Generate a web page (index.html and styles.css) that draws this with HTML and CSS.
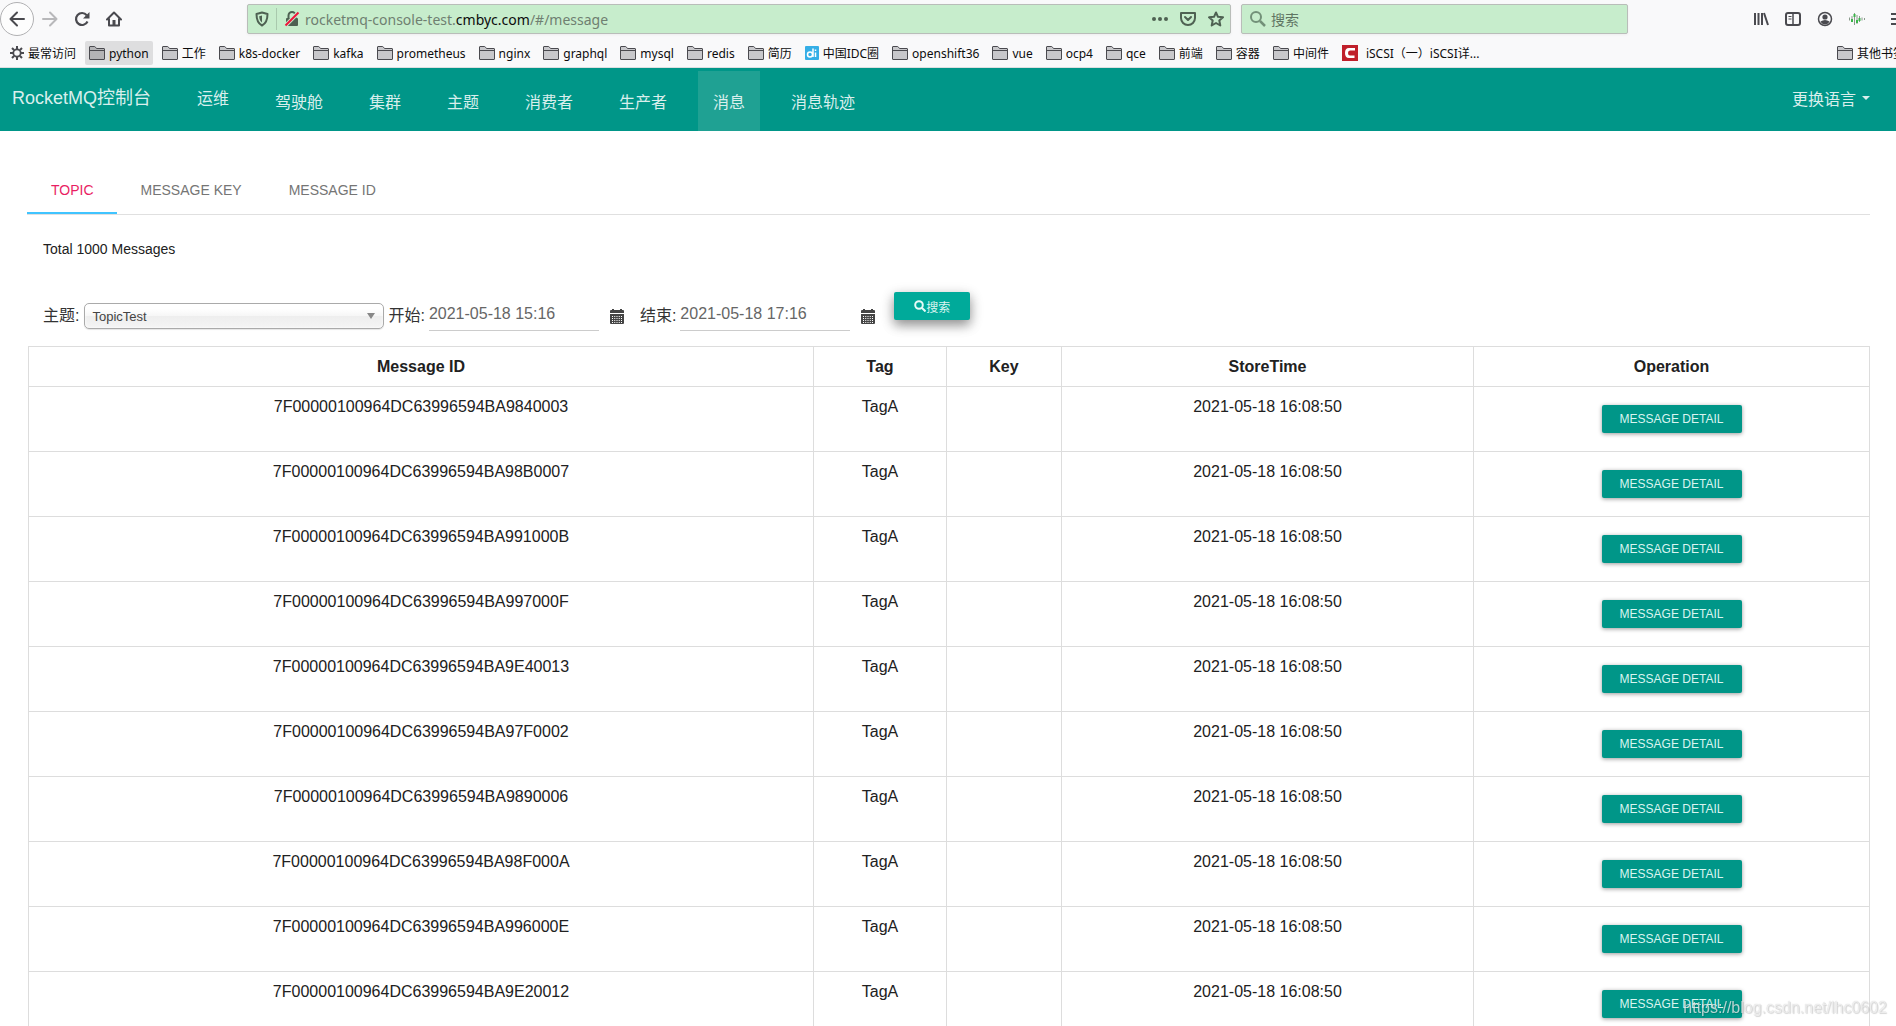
FILE: index.html
```html
<!DOCTYPE html>
<html lang="zh-CN">
<head>
<meta charset="utf-8">
<title>RocketMQ控制台</title>
<link rel="stylesheet" href="styles.css">
</head>
<body>
<svg class="sprite" aria-hidden="true">
  <symbol id="folder" viewBox="0 0 16 16"><path d="M.5 14V2q0-.5.5-.5h4.500q.6 0 .9.600L7.500 3.500h7.500q.5 0 .5.5v10q0 .5-.5.5H1q-.5 0-.5-.5z" fill="currentColor"/><path d="M.5 14V2q0-.5.5-.5h4.500q.6 0 .9.600L7.500 3.500h7.500q.5 0 .5.5v10q0 .5-.5.5H1q-.5 0-.5-.5zM.5 5.500h15" fill="none" stroke="#4a4a4f"/></symbol>
  <symbol id="calendar" viewBox="0 0 14 15"><path d="M1 1h1V0h2v1h6V0h2v1h1q1 0 1 1v2H0V2q0-1 1-1zM0 5h14v9q0 1-1 1H1q-1 0-1-1z" fill="#444"/><path d="M2 7.500h10M2 9.500h10M2 11.500h10M2 13.500h10" stroke="#fff" stroke-width="1" stroke-dasharray="1 1.250"/></symbol>
</svg>

<header class="browser">
  <div class="toolbar">
    <div class="history">
      <button class="tool back" aria-label="后退"><svg width="18" height="18" viewBox="0 0 18 18"><path d="M16 9H2.500M9 2.500 2.500 9 9 15.500" fill="none" stroke="#4a4a4f" stroke-width="2" stroke-linecap="round" stroke-linejoin="round"/></svg></button>
      <button class="tool" aria-label="前进"><svg width="18" height="18" viewBox="0 0 18 18"><path d="M2 9h13.500M9 2.500 15.500 9 9 15.500" fill="none" stroke="#b8b8ba" stroke-width="2" stroke-linecap="round" stroke-linejoin="round"/></svg></button>
      <button class="tool" aria-label="刷新"><svg width="16" height="16" viewBox="0 0 16 16"><path d="M13.500 10.500a6 6 0 1 1-.8-6.300" fill="none" stroke="#4a4a4f" stroke-width="2.200"/><path d="M15.500 1v6.500H9z" fill="#4a4a4f"/></svg></button>
      <button class="tool" aria-label="主页"><svg width="16" height="16" viewBox="0 0 16 16"><path d="M1 8.500 8 1.500l7 7M3 7.500v7h10v-7" fill="none" stroke="#4a4a4f" stroke-width="2" stroke-linejoin="round" stroke-linecap="round"/><path d="M6.500 14.500V9h3v5.500z" fill="#4a4a4f"/></svg></button>
    </div>
    <div class="urlbar">
      <svg width="14" height="16" viewBox="0 0 14 16"><path d="M7 1.500 12.500 3c0 6-1.500 9.500-5.500 11.500C3 12.500 1.500 9 1.500 3z" fill="none" stroke="#4e6152" stroke-width="2" stroke-linejoin="round"/><path d="M7 4.500v7c-2-1.500-2.600-3.500-2.800-6.300z" fill="#4e6152"/></svg>
      <span class="divider"></span>
      <svg width="16" height="16" viewBox="0 0 16 16"><path d="M4.500 7V4.500a3.500 3.500 0 0 1 7 0V7" fill="none" stroke="#4e6152" stroke-width="2"/><rect x="2" y="7" width="12" height="8" rx="1" fill="#4e6152"/><path d="M1 15 15 1" stroke="#c8edcc" stroke-width="4"/><path d="M1.500 14.500 14.500 1.500" stroke="#f0143c" stroke-width="2"/></svg>
      <div class="address" role="textbox" aria-label="地址">rocketmq-console-test.<b>cmbyc.com</b>/#/message</div>
      <svg width="16" height="16" viewBox="0 0 16 16" fill="#4e6152"><circle cx="2" cy="8" r="2"/><circle cx="8" cy="8" r="2"/><circle cx="14" cy="8" r="2"/></svg>
      <svg width="16" height="16" viewBox="0 0 16 16" fill="none" stroke="#4e6152" stroke-width="2" stroke-linecap="round" stroke-linejoin="round"><path d="M1 2h14v5a7 7 0 0 1-14 0zM5 6l3 3 3-3"/></svg>
      <svg width="16" height="16" viewBox="0 0 16 16" fill="none" stroke="#4e6152" stroke-width="2" stroke-linejoin="round"><path d="m8 1.500 2 4.300 5 .5-3.700 3.200 1 5L8 12l-4.300 2.500 1-5L1 6.300l5-.5z"/></svg>
    </div>
    <div class="searchbar">
      <svg width="18" height="18" viewBox="0 0 18 18" fill="none" stroke="#729078" stroke-width="2"><circle cx="7" cy="7" r="5"/><path d="m11 11 5 5" stroke-width="2.500"/></svg>
      <input class="websearch" type="text" placeholder="搜索" aria-label="搜索网页">
    </div>
    <div class="tools">
      <svg width="16" height="16" viewBox="0 0 16 16" stroke="#4a4a4f" stroke-width="2"><path d="M2 2v12M5.500 2v12M9 2v12M11 2l4 12"/></svg>
      <svg width="16" height="16" viewBox="0 0 16 16" fill="none" stroke="#4a4a4f"><rect x="1" y="2" width="14" height="12" rx="2" stroke-width="2"/><path d="M8 2v12" stroke-width="1.500"/><path d="M3.500 5.500h3M3.500 8h3"/></svg>
      <svg width="16" height="16" viewBox="0 0 16 16"><circle cx="8" cy="8" r="6.500" fill="none" stroke="#4a4a4f" stroke-width="1.500"/><circle cx="8" cy="6" r="2.600" fill="#4a4a4f"/><path d="M3.500 10.500q4.500-3 9 0-1.500 3-4.500 3t-4.500-3z" fill="#4a4a4f"/></svg>
      <svg width="16" height="16" viewBox="0 0 16 16" stroke="#8a9a8c" stroke-width="1"><path d="M.5 6.500v3M3 5v6M5.500 2v12M8 4v9M10.500 5v6M13 6.500v3M15.500 7v2"/><path d="M5.500 3v3M3 8v3M8 9v3M10.500 7v3" stroke="#3bb54a" stroke-width="2"/></svg>
      <span class="rule"></span>
      <svg class="burger" width="16" height="16" viewBox="0 0 16 16" stroke="#4a4a4f" stroke-width="2"><path d="M1 3h14M1 8h14M1 13h14"/></svg>
    </div>
  </div>
  <nav class="bookmarks" aria-label="书签">
    <a class="mark" href="#"><svg width="14" height="14" viewBox="0 0 14 14" fill="none" stroke="#4a4a4f"><circle cx="7" cy="7" r="3.700" stroke-width="1.800"/><path d="M7 0v3M7 11v3M0 7h3M11 7h3M2 2l2 2M10 10l2 2M2 12l2-2M10 4l2-2" stroke-width="2"/></svg>最常访问</a>
    <a class="mark held" href="#"><svg class="dir"><use href="#folder"/></svg>python</a>
    <a class="mark" href="#"><svg class="dir"><use href="#folder"/></svg>工作</a>
    <a class="mark" href="#"><svg class="dir"><use href="#folder"/></svg>k8s-docker</a>
    <a class="mark" href="#"><svg class="dir"><use href="#folder"/></svg>kafka</a>
    <a class="mark" href="#"><svg class="dir"><use href="#folder"/></svg>prometheus</a>
    <a class="mark" href="#"><svg class="dir"><use href="#folder"/></svg>nginx</a>
    <a class="mark" href="#"><svg class="dir"><use href="#folder"/></svg>graphql</a>
    <a class="mark" href="#"><svg class="dir"><use href="#folder"/></svg>mysql</a>
    <a class="mark" href="#"><svg class="dir"><use href="#folder"/></svg>redis</a>
    <a class="mark" href="#"><svg class="dir"><use href="#folder"/></svg>简历</a>
    <a class="mark" href="#"><svg width="14" height="14" viewBox="0 0 14 14"><rect width="14" height="14" rx="1" fill="#35aee6"/><circle cx="5" cy="8.500" r="2.500" fill="none" stroke="#fff" stroke-width="1.500"/><path d="M8 2.500V11M10.500 6.500V11M10.500 3.500V5" stroke="#fff" stroke-width="1.500"/></svg>中国IDC圈</a>
    <a class="mark" href="#"><svg class="dir"><use href="#folder"/></svg>openshift36</a>
    <a class="mark" href="#"><svg class="dir"><use href="#folder"/></svg>vue</a>
    <a class="mark" href="#"><svg class="dir"><use href="#folder"/></svg>ocp4</a>
    <a class="mark" href="#"><svg class="dir"><use href="#folder"/></svg>qce</a>
    <a class="mark" href="#"><svg class="dir"><use href="#folder"/></svg>前端</a>
    <a class="mark" href="#"><svg class="dir"><use href="#folder"/></svg>容器</a>
    <a class="mark" href="#"><svg class="dir"><use href="#folder"/></svg>中间件</a>
    <a class="mark wide" href="#"><svg width="16" height="16" viewBox="0 0 16 16"><rect width="16" height="16" fill="#c0202b"/><path d="M13 5.500V3H7Q3 3 3 8t4 5h5.500v-2.500H8Q6 10.500 6 8t2-2.500z" fill="#fff"/></svg>iSCSI（一）iSCSI详...</a>
    <a class="mark others" href="#"><svg class="dir"><use href="#folder"/></svg>其他书签</a>
  </nav>
</header>

<nav class="navbar" aria-label="主导航">
  <a class="brand" href="#">RocketMQ控制台</a>
  <a class="link ops" href="#">运维</a>
  <ul class="menu">
    <li><a class="link" href="#">驾驶舱</a></li>
    <li><a class="link" href="#">集群</a></li>
    <li><a class="link" href="#">主题</a></li>
    <li><a class="link" href="#">消费者</a></li>
    <li><a class="link" href="#">生产者</a></li>
    <li><a class="link active" href="#">消息</a></li>
    <li><a class="link" href="#">消息轨迹</a></li>
  </ul>
  <button class="language">更换语言<span class="caret"></span></button>
</nav>

<main class="page">
  <div class="tabs" role="tablist">
    <button class="tab current" role="tab" aria-selected="true">TOPIC</button>
    <button class="tab" role="tab" aria-selected="false">MESSAGE KEY</button>
    <button class="tab" role="tab" aria-selected="false">MESSAGE ID</button>
  </div>
  <p class="total">Total 1000 Messages</p>
  <form class="filters">
    <label class="name" for="topic">主题:</label>
    <div class="picker"><select id="topic"><option>TopicTest</option></select><span class="arrow"></span></div>
    <label class="name" for="begin">开始:</label>
    <input class="date" id="begin" type="text" value="2021-05-18 15:16">
    <button class="pick" type="button" aria-label="选择开始时间"><svg width="14" height="15"><use href="#calendar"/></svg></button>
    <label class="name" for="end">结束:</label>
    <input class="date" id="end" type="text" value="2021-05-18 17:16">
    <button class="pick" type="button" aria-label="选择结束时间"><svg width="14" height="15"><use href="#calendar"/></svg></button>
    <button class="raised search" type="button"><svg width="12" height="12" viewBox="0 0 12 12" fill="none" stroke="#e6faf7" stroke-width="2"><circle cx="5" cy="5" r="3.800"/><path d="m8 8 3.500 3.500"/></svg>搜索</button>
  </form>
  <table class="messages">
    <colgroup><col class="c-id"><col class="c-tag"><col class="c-key"><col class="c-time"><col class="c-op"></colgroup>
    <thead><tr><th>Message ID</th><th>Tag</th><th>Key</th><th>StoreTime</th><th>Operation</th></tr></thead>
    <tbody>
      <tr><td>7F00000100964DC63996594BA9840003</td><td>TagA</td><td></td><td>2021-05-18 16:08:50</td><td><button class="raised detail">MESSAGE DETAIL</button></td></tr>
      <tr><td>7F00000100964DC63996594BA98B0007</td><td>TagA</td><td></td><td>2021-05-18 16:08:50</td><td><button class="raised detail">MESSAGE DETAIL</button></td></tr>
      <tr><td>7F00000100964DC63996594BA991000B</td><td>TagA</td><td></td><td>2021-05-18 16:08:50</td><td><button class="raised detail">MESSAGE DETAIL</button></td></tr>
      <tr><td>7F00000100964DC63996594BA997000F</td><td>TagA</td><td></td><td>2021-05-18 16:08:50</td><td><button class="raised detail">MESSAGE DETAIL</button></td></tr>
      <tr><td>7F00000100964DC63996594BA9E40013</td><td>TagA</td><td></td><td>2021-05-18 16:08:50</td><td><button class="raised detail">MESSAGE DETAIL</button></td></tr>
      <tr><td>7F00000100964DC63996594BA97F0002</td><td>TagA</td><td></td><td>2021-05-18 16:08:50</td><td><button class="raised detail">MESSAGE DETAIL</button></td></tr>
      <tr><td>7F00000100964DC63996594BA9890006</td><td>TagA</td><td></td><td>2021-05-18 16:08:50</td><td><button class="raised detail">MESSAGE DETAIL</button></td></tr>
      <tr><td>7F00000100964DC63996594BA98F000A</td><td>TagA</td><td></td><td>2021-05-18 16:08:50</td><td><button class="raised detail">MESSAGE DETAIL</button></td></tr>
      <tr><td>7F00000100964DC63996594BA996000E</td><td>TagA</td><td></td><td>2021-05-18 16:08:50</td><td><button class="raised detail">MESSAGE DETAIL</button></td></tr>
      <tr><td>7F00000100964DC63996594BA9E20012</td><td>TagA</td><td></td><td>2021-05-18 16:08:50</td><td><button class="raised detail">MESSAGE DETAIL</button></td></tr>
    </tbody>
  </table>
</main>
<div class="watermark">https://blog.csdn.net/lhc0602</div>
</body>
</html>
```
FILE: styles.css
```css
* { box-sizing: border-box; }
body {
  margin: 0;
  height: 100vh;
  overflow: hidden;
  background: #fff;
  color: #212121;
  font-family: "Liberation Sans", "Noto Sans CJK SC", sans-serif;
  font-size: 16px;
}
button, input, select { font: inherit; color: inherit; border: 0; background: none; padding: 0; margin: 0; }
a { color: inherit; text-decoration: none; }
svg { flex: none; display: block; }
.sprite { position: absolute; width: 0; height: 0; }

/* browser chrome */
.browser {
  height: 68px;
  background: #f9f9fa;
  border-bottom: 1px solid #dcdfe0;
  font-family: "Noto Sans", "Noto Sans CJK SC", sans-serif;
}
.toolbar { display: flex; align-items: center; height: 38px; }
.history { display: flex; align-items: center; width: 247px; }
.tool { width: 32px; height: 32px; display: grid; place-items: center; }
.back { width: 34px; height: 34px; border: 1px solid #b1b1b3; border-radius: 50%; background: #fdfdfd; }
.urlbar, .searchbar {
  display: flex;
  align-items: center;
  height: 30px;
  background: #c7edcc;
  border: 1px solid #b9bdb9;
  border-radius: 2px;
  font-size: 14px;
  box-shadow: 0 1px 3px #0000000d;
}
.urlbar { flex: 984; gap: 12px; padding: 0 6px 0 7px; margin-right: 10px; }
.divider { width: 1px; height: 22px; background: #a9c9ad; margin: 0 -5px; }
.address { flex: 1; color: #6f7f71; margin-left: -7px; white-space: nowrap; }
.address b { font-weight: 400; color: #0c0c0d; }
.searchbar { flex: 384; gap: 4px; padding-left: 7px; }
.websearch { flex: 1; min-width: 0; outline: 0; }
.websearch::placeholder { color: #5f7563; opacity: 1; }
.tools { display: flex; align-items: center; gap: 16px; width: 268px; padding-left: 125px; overflow: hidden; }
.rule { width: 1px; height: 34px; background: #c4c4c6; margin-left: -5px; }
.burger { margin-left: -2px; }
.bookmarks { display: flex; align-items: center; padding: 3px 0 0 6px; overflow: hidden; }
.mark {
  display: flex;
  align-items: center;
  gap: 4px;
  height: 24px;
  padding: 0 4px;
  margin-right: 5px;
  border-radius: 2px;
  color: #0c0c0d;
  font-size: 12px;
  white-space: nowrap;
  flex: none;
}
.held { background: #dededf; }
.dir { width: 16px; height: 16px; color: #c8c8cb; }
.held .dir { color: #b4b4b6; }
.wide { gap: 8px; }
.others { margin: 0 -13px 0 auto; }

/* application bar */
.navbar { display: flex; height: 63px; background: #009688; color: #d9efed; }
.brand { width: 170px; padding-left: 12px; font-size: 18px; line-height: 60px; }
.link { display: block; padding: 0 15px; line-height: 63px; font-size: 16px; }
.ops { margin-left: 12px; line-height: 61px; }
.menu { display: flex; gap: 16px; list-style: none; margin: 3px 0 0 16px; padding: 0; height: 60px; }
.menu .link { height: 60px; }
.active { background: #1fa193; }
.language { display: flex; align-items: center; gap: 6px; margin-left: auto; padding-right: 26px; height: 60px; }
.caret { border: 4px solid transparent; border-top-color: currentColor; border-bottom: 0; }

/* message query */
.page { padding: 34px 26px 0 27px; }
.tabs { display: flex; border-bottom: 1px solid #e0e0e0; }
.tab { height: 49px; padding: 2px 23px 0 24px; font-size: 14px; line-height: 46px; color: #757575; border-bottom: 2px solid transparent; }
.current { color: #e91e63; border-bottom-color: #40c4ff; }
.total { margin: 24px 16px 0; font-size: 14px; line-height: 20px; }
.filters { display: flex; align-items: center; height: 36px; margin: 39px 16px 12px; }
.name { color: #333; line-height: 24px; white-space: nowrap; }
.picker { display: grid; align-items: center; width: 300px; margin: 0 4px 0 5px; }
.picker select {
  grid-area: 1 / 1;
  appearance: none;
  height: 26px;
  padding: 0 7px;
  border: 1px solid #aaa;
  border-radius: 5px;
  background: linear-gradient(#fff 20%, #f6f6f6 50%, #eee 52%, #f4f4f4);
  box-shadow: 0 0 3px #fff inset, 0 1px 1px #0000001a;
  color: #444;
  font-size: 13px;
}
.arrow { grid-area: 1 / 1; justify-self: end; margin-right: 9px; border: 4px solid transparent; border-top: 6px solid #888; border-bottom: 0; pointer-events: none; }
.date { width: 170px; height: 30px; margin: 0 11px 0 4px; padding-bottom: 3px; border-bottom: 1px solid #ccc; color: #666; }
.pick { margin-right: 16px; }
.raised {
  display: inline-flex;
  align-items: center;
  justify-content: center;
  height: 28px;
  border-radius: 2px;
  background: #009688;
  box-shadow: 0 1px 4px #00000066;
  color: #d9f4f0;
  font-size: 12px;
}
.search { width: 76px; margin: 0 0 20px 3px; background: #00aa9a; box-shadow: 0 5px 11px #00000059, 0 4px 15px #00000026; }
.messages { width: calc(100% - 2px); margin: 0 1px; table-layout: fixed; border-collapse: collapse; text-align: center; }
.messages th, .messages td { border: 1px solid #ddd; padding: 8px; line-height: 23px; vertical-align: top; }
.messages td { height: 65px; }
.c-id { width: 785px; }
.c-tag { width: 133px; }
.c-key { width: 115px; }
.c-time { width: 412px; }
.c-op { width: 396px; }
.detail { width: 140px; margin-top: 10px; vertical-align: top; }
.watermark {
  position: fixed;
  right: 9px;
  bottom: 8px;
  color: #ffffffb3;
  text-shadow: 0 0 1px #00000040, 1px 1px 1px #00000026;
  line-height: 20px;
}
```
